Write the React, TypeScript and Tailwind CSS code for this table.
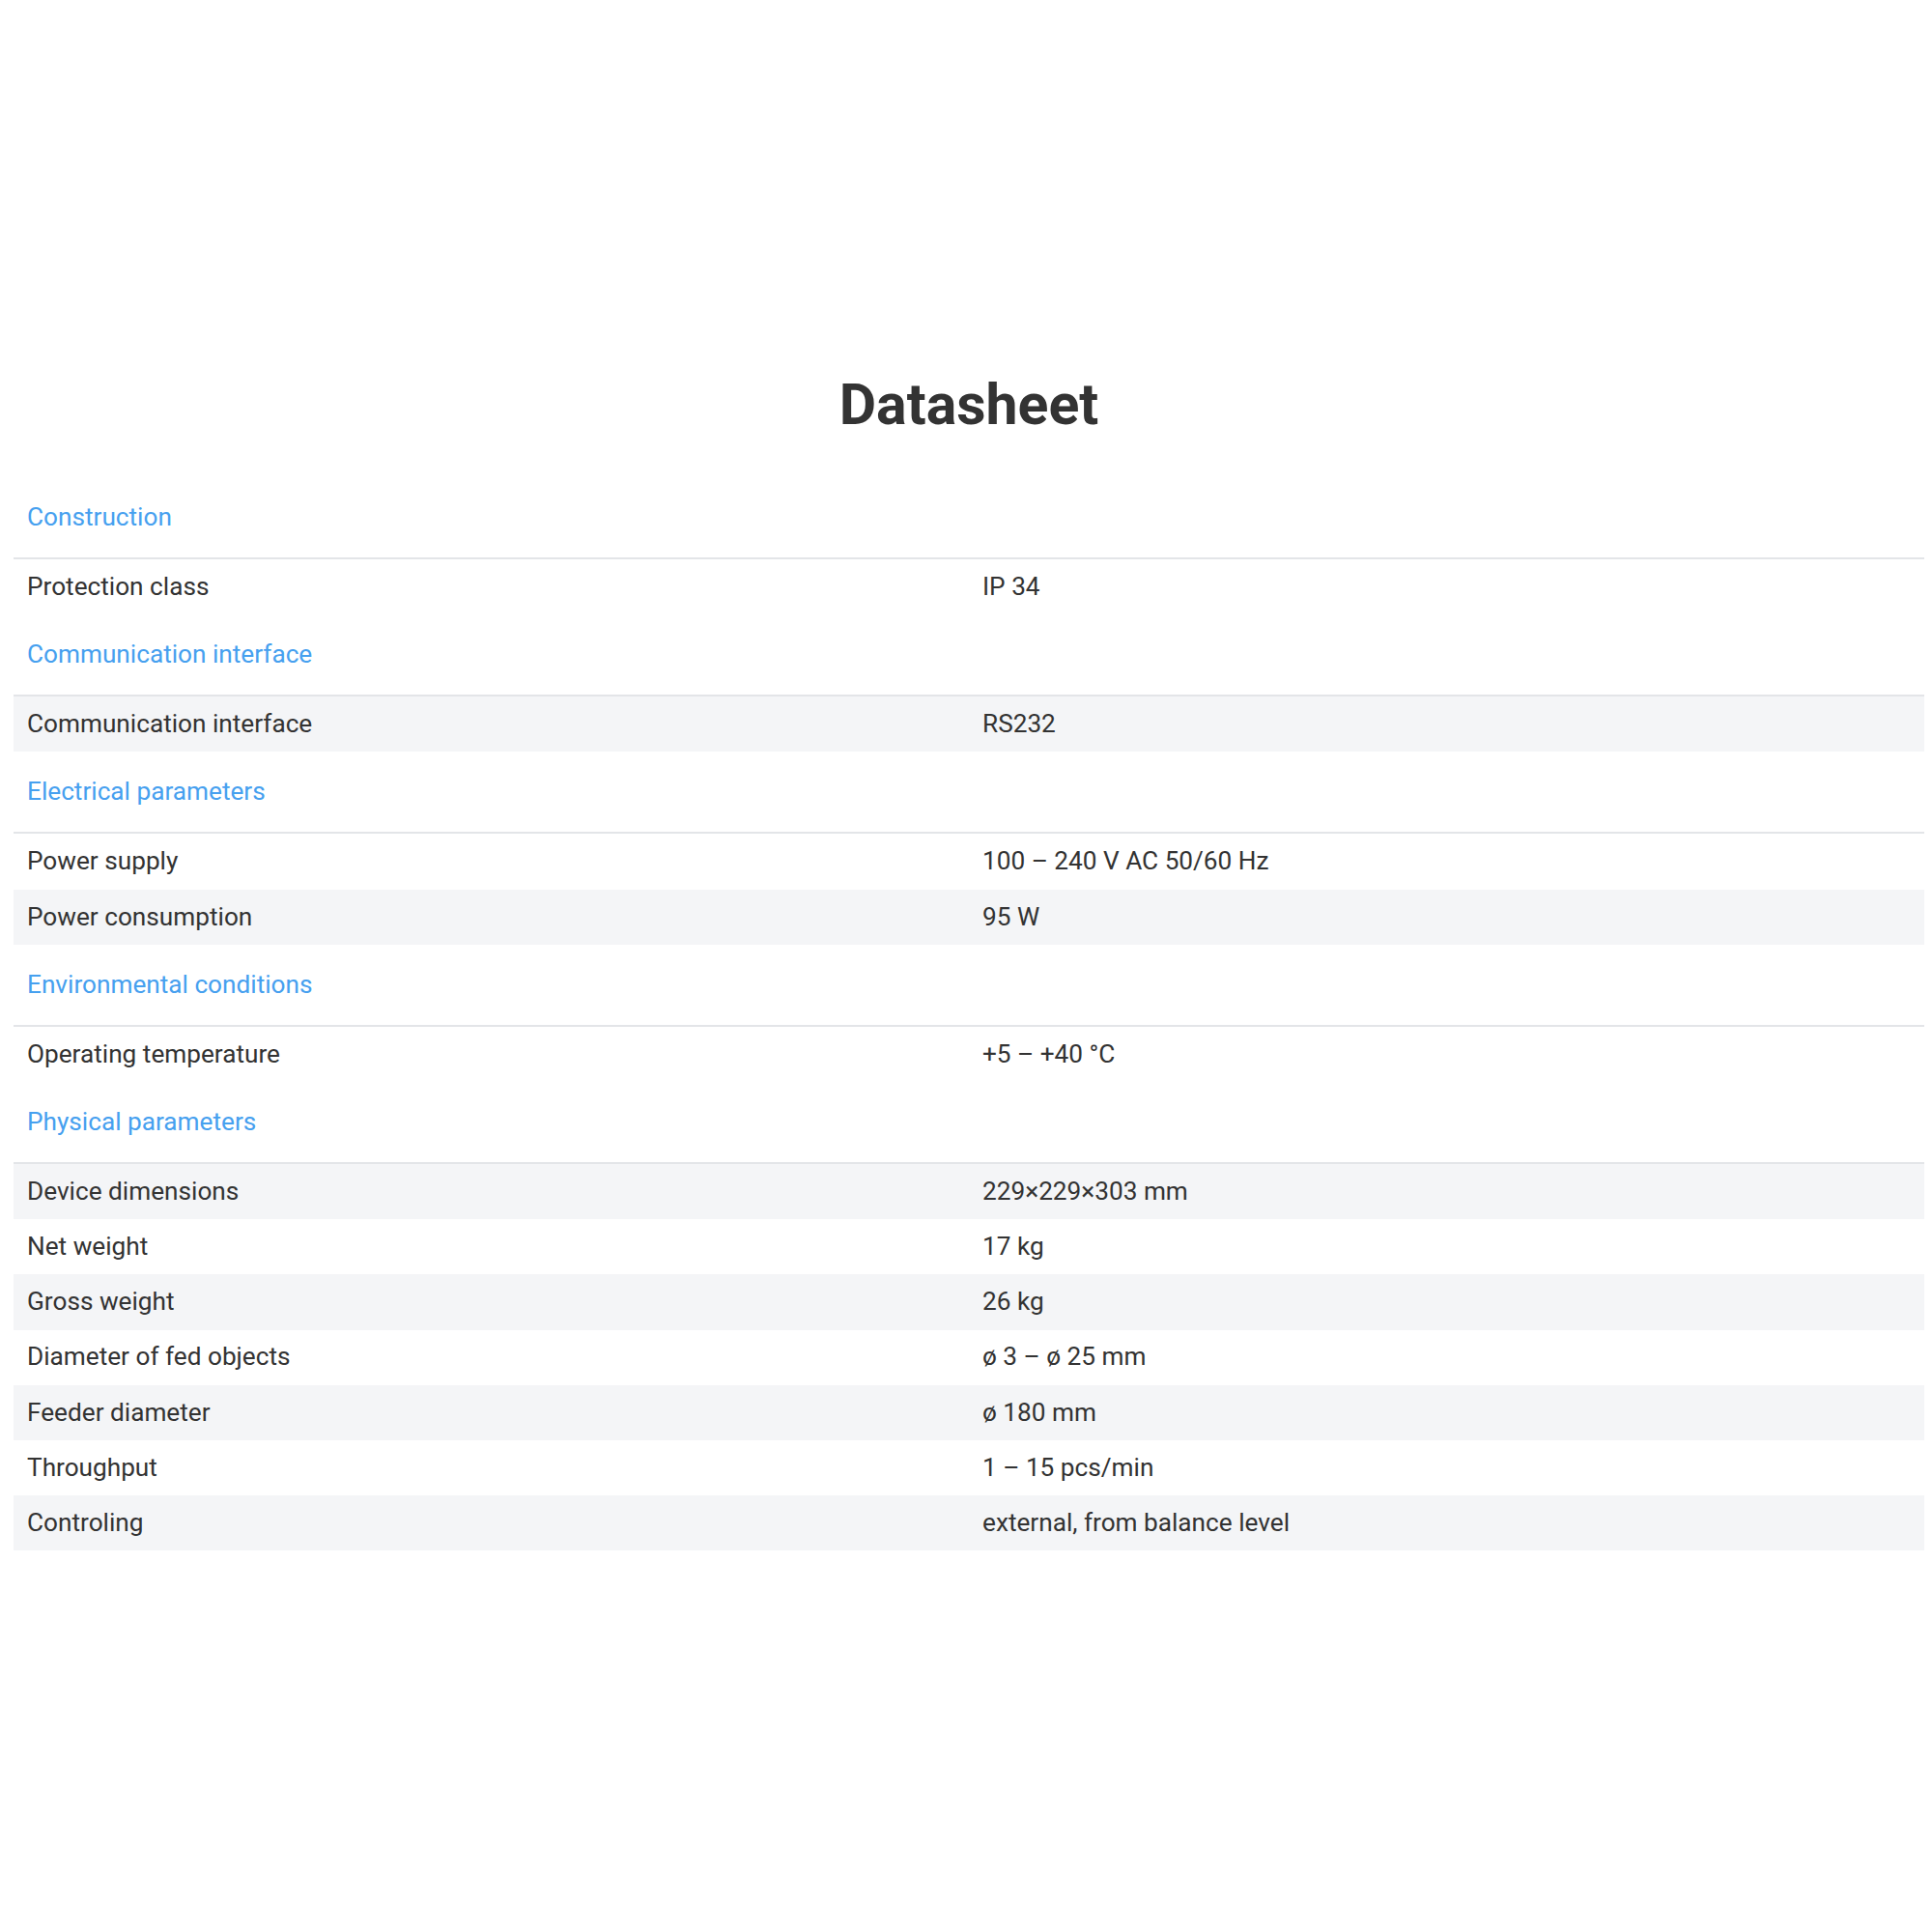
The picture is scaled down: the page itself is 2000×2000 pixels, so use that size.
import React from "react";

type Row = { label: string; value: string };
type Section = { title: string; rows: Row[] };

const sections: Section[] = [
  { title: "Construction", rows: [{ label: "Protection class", value: "IP 34" }] },
  { title: "Communication interface", rows: [{ label: "Communication interface", value: "RS232" }] },
  {
    title: "Electrical parameters",
    rows: [
      { label: "Power supply", value: "100 – 240 V AC 50/60 Hz" },
      { label: "Power consumption", value: "95 W" },
    ],
  },
  { title: "Environmental conditions", rows: [{ label: "Operating temperature", value: "+5 – +40 °C" }] },
  {
    title: "Physical parameters",
    rows: [
      { label: "Device dimensions", value: "229×229×303 mm" },
      { label: "Net weight", value: "17 kg" },
      { label: "Gross weight", value: "26 kg" },
      { label: "Diameter of fed objects", value: "ø 3 – ø 25 mm" },
      { label: "Feeder diameter", value: "ø 180 mm" },
      { label: "Throughput", value: "1 – 15 pcs/min" },
      { label: "Controling", value: "external, from balance level" },
    ],
  },
];

export default function App() {
  let n = 0;
  return (
    <main className="w-[2000px] min-h-[2000px] bg-white font-['Roboto',sans-serif] text-[#333333]">
      <div className="pt-[384px] ml-[14px] w-[1978px]">
        <h1 className="text-center text-[59px] leading-[70px] font-bold text-[#333333] mb-[40px]">Datasheet</h1>

        <div className="flex flex-col text-[26.2px]">
          {sections.map((s) => (
            <div key={s.title}>
              {/* Section header */}
              <div className="h-[85px] flex items-center px-[14px] border-b-2 border-[#e3e5e8] text-[#46a0ef]">
                {s.title}
              </div>
              {s.rows.map((r) => {
                n += 1;
                const gray = n % 2 === 0;
                return (
                  <div key={r.label} className={`h-[57.2px] grid grid-cols-2 items-center ${gray ? "bg-[#f4f5f7]" : "bg-white"}`}>
                    <div className="px-[14px]">{r.label}</div>
                    <div className="px-[14px]">{r.value}</div>
                  </div>
                );
              })}
            </div>
          ))}
        </div>
      </div>
    </main>
  );
}
